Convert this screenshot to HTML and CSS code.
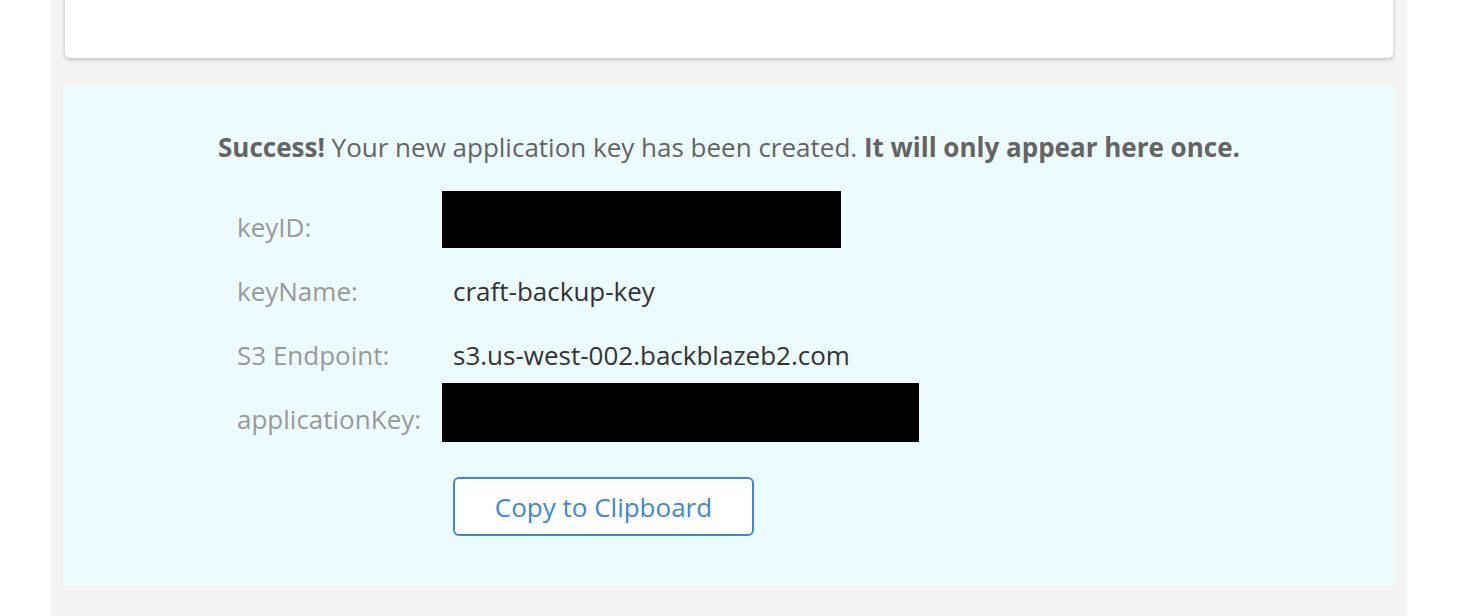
FILE: index.html
```html
<!DOCTYPE html>
<html>
<head>
<meta charset="utf-8">
<link rel="stylesheet" href="styles.css">
</head>
<body>
<div class="column">
  <div class="card"></div>
  <div class="success">
    <p class="headline"><b>Success!</b> Your new application key has been created. <b>It will only appear here once.</b></p>
    <div class="rows">
      <div class="row">
        <div class="label">keyID:</div>
        <div class="value"><div class="redact redact-id"></div></div>
      </div>
      <div class="row">
        <div class="label">keyName:</div>
        <div class="value"><span class="text">craft-backup-key</span></div>
      </div>
      <div class="row">
        <div class="label">S3 Endpoint:</div>
        <div class="value"><span class="text">s3.us-west-002.backblazeb2.com</span></div>
      </div>
      <div class="row">
        <div class="label">applicationKey:</div>
        <div class="value"><div class="redact redact-key"></div></div>
      </div>
      <div class="row row-btn">
        <div class="label"></div>
        <div class="value"><button class="copy">Copy to Clipboard</button></div>
      </div>
    </div>
  </div>
</div>
</body>
</html>
```

FILE: styles.css
```css
html, body {
  margin: 0;
  padding: 0;
  background: #ffffff;
  height: 616px;
  overflow: hidden;
}
body {
  font-family: "Open Sans", "Liberation Sans", sans-serif;
}
.column {
  margin-left: 51px;
  width: 1356px;
  height: 616px;
  background: #f4f4f4;
  padding: 0 12px;
  box-sizing: border-box;
  display: flex;
  flex-direction: column;
}
.card {
  margin: -10px 2px 0 2px;
  height: 68px;
  background: #ffffff;
  border-radius: 0 0 5px 5px;
  box-shadow: 0 2px 4px rgba(0,0,0,0.22);
}
.success {
  margin-top: 26px;
  height: 502px;
  background: #eefbfe;
  box-sizing: border-box;
  padding-top: 45px;
}
.headline {
  margin: 0;
  text-align: center;
  font-size: 26px;
  line-height: 36px;
  color: #646464;
}
.headline b {
  font-weight: 700;
}
.rows {
  margin-top: 30px;
  padding-left: 174px;
  display: flex;
  flex-direction: column;
}
.row {
  display: flex;
  height: 64px;
  align-items: center;
}
.label {
  width: 205px;
  font-size: 26px;
  color: #999999;
  line-height: 36px;
}
.value {
  display: flex;
  align-items: center;
  height: 100%;
}
.text {
  padding-left: 11px;
  font-size: 26px;
  color: #333333;
  line-height: 36px;
}
.redact {
  background: #000;
  align-self: flex-start;
  margin-top: -4px;
}
.redact-id {
  width: 399px;
  height: 57px;
}
.redact-key {
  width: 477px;
  height: 59px;
}
.row-btn {
  height: auto;
  margin-top: 26px;
}
.copy {
  margin-left: 11px;
  width: 301px;
  height: 59px;
  background: #ffffff;
  border: 2px solid #3e88d1;
  border-radius: 6px;
  color: #3e88d1;
  font-family: "Open Sans", "Liberation Sans", sans-serif;
  font-size: 26px;
  padding: 0;
}
```
